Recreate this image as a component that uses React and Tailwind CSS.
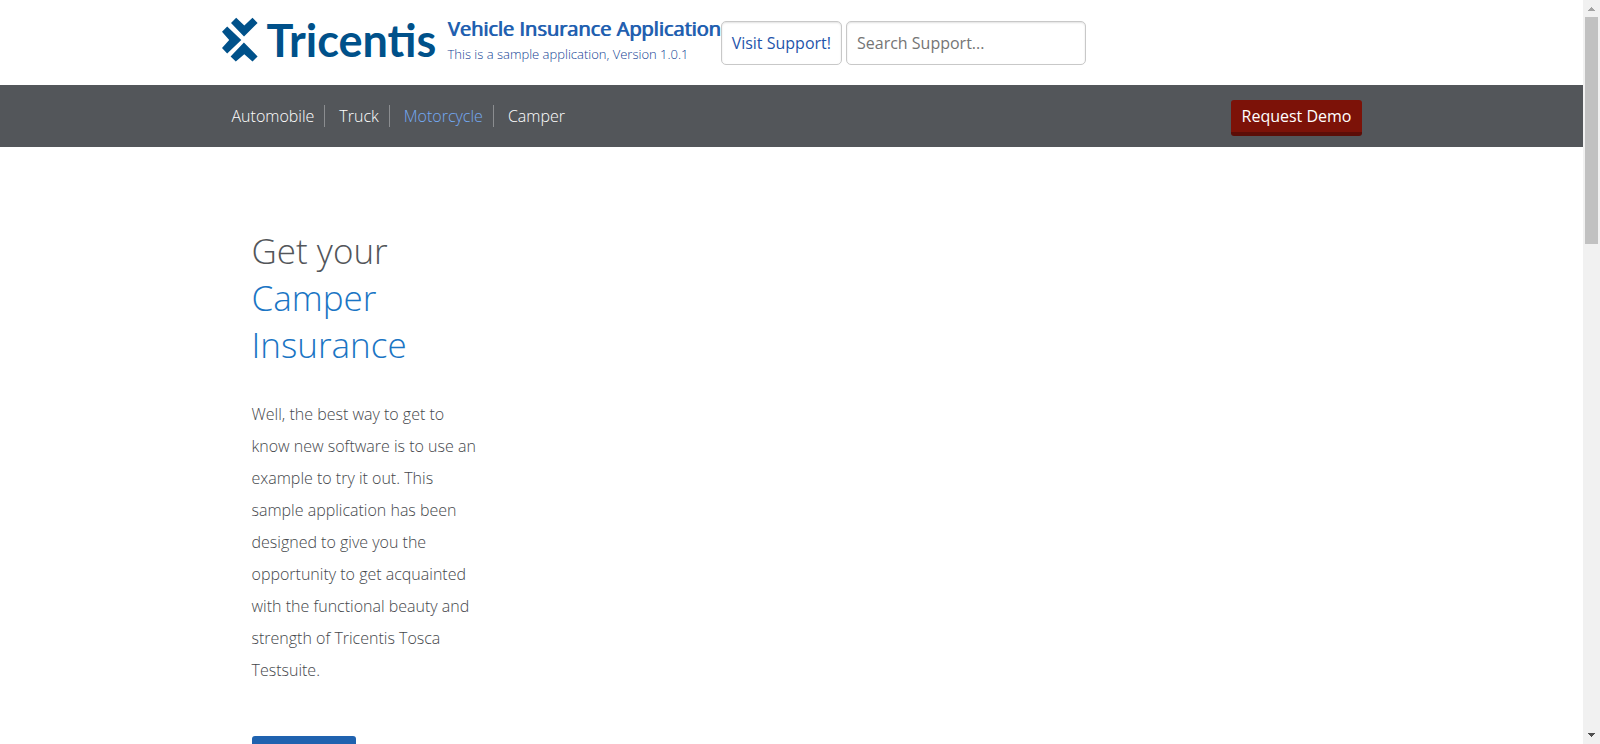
function Logo() {
  return (
    <a href="#" aria-label="Tricentis" className="flex items-center text-[#00518a]">
      <svg width="37" height="46" viewBox="0 0 37 46" fill="currentColor" aria-hidden="true" className="shrink-0">
        <path d="M14.2 0.8L9 6L22 19.6L35.6 6L30.5 0.8L22.3 8.6Z" />
        <path d="M5.2 9.6L0 14.8L7.2 22.9L0 31L5.2 36.4L19.3 22.9Z" />
        <path d="M21.9 25.4L8.6 39.4L13.8 44.6L22.3 37.2L30.5 44.6L35.6 39.4Z" />
      </svg>
      <span className="ml-2 text-[45px] leading-[46px] font-bold font-['Lato','Open_Sans',sans-serif]">Tricentis</span>
    </a>
  );
}

const NAV = ["Automobile", "Truck", "Motorcycle", "Camper"];

function Header() {
  return (
    <header>
      <div className="mx-auto flex h-[85px] max-w-[1140px]">
        <div className="w-[226px] shrink-0 pt-[17px]">
          <Logo />
        </div>
        <div className="pt-[15px] whitespace-nowrap text-[#1f5fb0]">
          <h1 className="text-xl leading-7 font-normal [text-shadow:1px_0_0_currentColor]">Vehicle Insurance Application</h1>
          <p className="text-[13px] leading-[22px] font-light text-[#123f94]">This is a sample application, Version 1.0.1</p>
        </div>
        <form className="flex items-start gap-1 pt-[21px]" onSubmit={(e) => e.preventDefault()}>
          <button type="button" className="h-11 rounded-[5px] border border-[#c8c8c8] px-[10px] whitespace-nowrap text-[#1f55ab] shadow-[inset_0_1px_2px_rgba(0,0,0,0.12)]">
            Visit Support!
          </button>
          <input
            type="text"
            aria-label="Search Support"
            placeholder="Search Support..."
            className="h-11 w-60 rounded-[5px] border border-[#c8c8c8] px-[10px] shadow-[inset_0_1px_2px_rgba(0,0,0,0.12)] placeholder:text-[#757575]"
          />
        </form>
      </div>
      <div className="bg-[#53565a]">
        <div className="mx-auto flex h-[62px] max-w-[1140px] items-center justify-between">
          <nav className="flex font-light">
            {NAV.map((name, i) => (
              <a
                key={name}
                href="#"
                className={
                  (name === "Motorcycle" ? "text-[#74aaf4]" : "text-white") +
                  (i === 0 ? " pl-[10px]" : " pl-[14px]") +
                  (i < NAV.length - 1 ? " border-r border-[#8b8d90]" : "") +
                  " pr-[10px] leading-[22px]"
                }
              >
                {name}
              </a>
            ))}
          </nav>
          <button type="button" className="mt-1 h-9 rounded-[3px] border-b-4 border-[#5c0d07] bg-[#7c1208] pr-[10px] pl-[11px] font-medium text-white">
            Request Demo
          </button>
        </div>
      </div>
    </header>
  );
}

function Scrollbar() {
  return (
    <div aria-hidden="true" className="flex w-[17px] shrink-0 flex-col items-center bg-[#f1f1f1]">
      <svg width="17" height="17" shapeRendering="crispEdges" fill="#a3a3a3">
        <path d="M8 7h1v1h1v1h1v1h1v1H5v-1h1V9h1V8h1z" />
      </svg>
      <div className="h-[30.5%] w-[13px] bg-[#c1c1c1]" />
      <svg width="17" height="17" shapeRendering="crispEdges" fill="#505050" className="mt-auto">
        <path d="M5 6h7v1h-1v1h-1v1H9v1H8V9H7V8H6V7H5z" />
      </svg>
    </div>
  );
}

export default function App() {
  return (
    <div className="flex h-screen bg-white text-base font-['Open_Sans','Noto_Sans',sans-serif] text-[#53565a]">
      <div className="min-w-0 flex-1 overflow-hidden">
        <Header />
        <main className="mx-auto max-w-[1140px] px-[30px] pt-20">
          <section className="w-[228px]">
            <h2 className="text-[35px] leading-[47px] font-light">
              Get your <span className="block text-[#1a75c4]">Camper Insurance</span>
            </h2>
            <p className="mt-[30px] leading-8 font-light text-[#45484c]">
              Well, the best way to get to know new software is to use an example to try it out. This sample application
              has been designed to give you the opportunity to get acquainted with the functional beauty and strength of
              Tricentis Tosca Testsuite.
            </p>
            <button type="button" aria-label="Get started" className="mt-[50px] h-11 w-[104px] rounded-[3px] bg-[#1f62af]" />
          </section>
        </main>
      </div>
      <Scrollbar />
    </div>
  );
}
